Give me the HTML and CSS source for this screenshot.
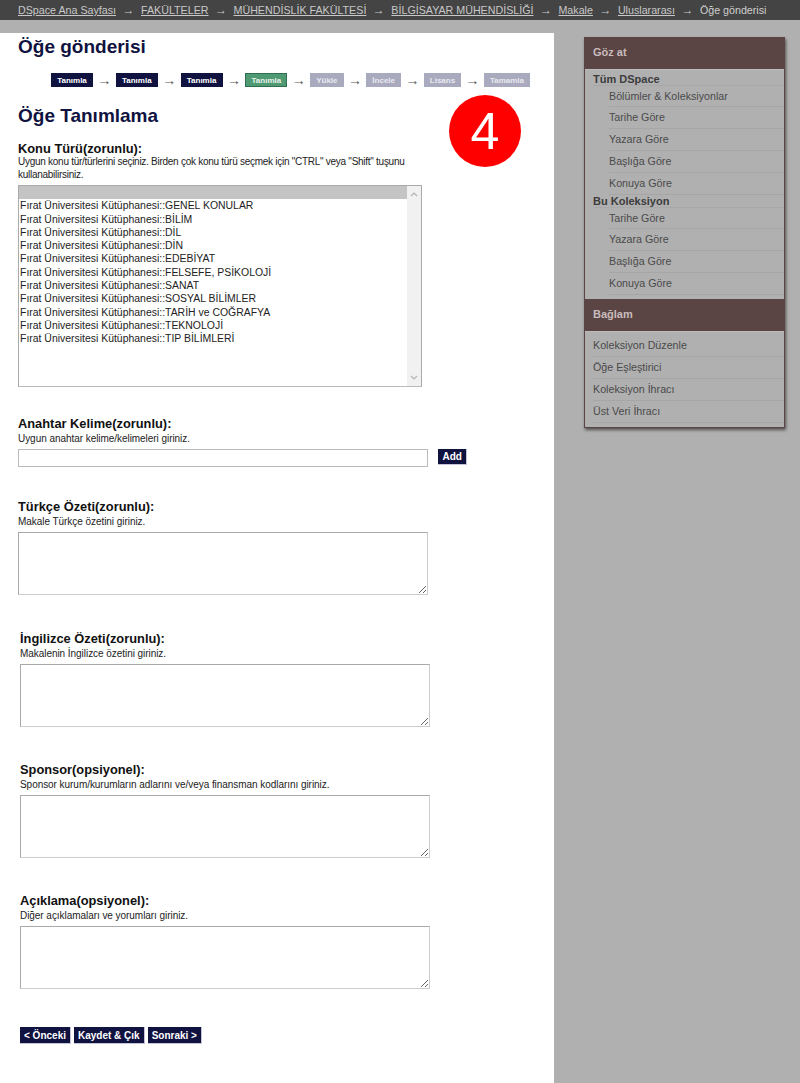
FILE: index.html
```html
<!DOCTYPE html>
<html lang="tr">
<head>
<meta charset="utf-8">
<title>Öğe gönderisi</title>
<link rel="stylesheet" href="styles.css">
</head>
<body>
<nav class="trail">
  <a href="#">DSpace Ana Sayfası</a><span class="sep">→</span>
  <a href="#">FAKÜLTELER</a><span class="sep">→</span>
  <a href="#">MÜHENDİSLİK FAKÜLTESİ</a><span class="sep">→</span>
  <a href="#">BİLGİSAYAR MÜHENDİSLİĞİ</a><span class="sep">→</span>
  <a href="#">Makale</a><span class="sep">→</span>
  <a href="#">Uluslararası</a><span class="sep">→</span>
  <span>Öğe gönderisi</span>
</nav>
<div class="page">
  <main class="main">
    <h1 class="title">Öğe gönderisi</h1>
    <div class="steps">
      <span class="step done">Tanımla</span><span class="arrow">→</span>
      <span class="step done">Tanımla</span><span class="arrow">→</span>
      <span class="step done">Tanımla</span><span class="arrow">→</span>
      <span class="step current">Tanımla</span><span class="arrow">→</span>
      <span class="step todo">Yükle</span><span class="arrow">→</span>
      <span class="step todo">İncele</span><span class="arrow">→</span>
      <span class="step todo">Lisans</span><span class="arrow">→</span>
      <span class="step todo">Tamamla</span>
    </div>
    <h2 class="title sub">Öğe Tanımlama</h2>
    <div class="badge">4</div>

    <section class="field first">
      <h3 class="label">Konu Türü(zorunlu):</h3>
      <p class="help tight">Uygun konu tür/türlerini seçiniz. Birden çok konu türü seçmek için "CTRL" veya "Shift" tuşunu kullanabilirsiniz.</p>
      <div class="listbox">
        <div class="options">
          <div class="option selected">&nbsp;</div>
          <div class="option">Fırat Üniversitesi Kütüphanesi::GENEL KONULAR</div>
          <div class="option">Fırat Üniversitesi Kütüphanesi::BİLİM</div>
          <div class="option">Fırat Üniversitesi Kütüphanesi::DİL</div>
          <div class="option">Fırat Üniversitesi Kütüphanesi::DİN</div>
          <div class="option">Fırat Üniversitesi Kütüphanesi::EDEBİYAT</div>
          <div class="option">Fırat Üniversitesi Kütüphanesi::FELSEFE, PSİKOLOJİ</div>
          <div class="option">Fırat Üniversitesi Kütüphanesi::SANAT</div>
          <div class="option">Fırat Üniversitesi Kütüphanesi::SOSYAL BİLİMLER</div>
          <div class="option">Fırat Üniversitesi Kütüphanesi::TARİH ve COĞRAFYA</div>
          <div class="option">Fırat Üniversitesi Kütüphanesi::TEKNOLOJİ</div>
          <div class="option">Fırat Üniversitesi Kütüphanesi::TIP BİLİMLERİ</div>
        </div>
        <div class="scrollbar">
          <svg class="chev" width="8" height="5" viewBox="0 0 8 5"><path d="M1 4 L4 1 L7 4" fill="none" stroke="#b4b4b4" stroke-width="1.2"/></svg>
          <svg class="chev" width="8" height="5" viewBox="0 0 8 5"><path d="M1 1 L4 4 L7 1" fill="none" stroke="#b4b4b4" stroke-width="1.2"/></svg>
        </div>
      </div>
    </section>

    <section class="field keyword">
      <h3 class="label">Anahtar Kelime(zorunlu):</h3>
      <p class="help">Uygun anahtar kelime/kelimeleri giriniz.</p>
      <div class="input-row">
        <input class="text-input" type="text">
        <button class="btn" type="button">Add</button>
      </div>
    </section>

    <section class="field summary">
      <h3 class="label">Türkçe Özeti(zorunlu):</h3>
      <p class="help">Makale Türkçe özetini giriniz.</p>
      <textarea class="area"></textarea>
    </section>

    <section class="field shifted english">
      <h3 class="label">İngilizce Özeti(zorunlu):</h3>
      <p class="help">Makalenin İngilizce özetini giriniz.</p>
      <textarea class="area"></textarea>
    </section>

    <section class="field shifted sponsor">
      <h3 class="label">Sponsor(opsiyonel):</h3>
      <p class="help">Sponsor kurum/kurumların adlarını ve/veya finansman kodlarını giriniz.</p>
      <textarea class="area"></textarea>
    </section>

    <section class="field shifted sponsor">
      <h3 class="label">Açıklama(opsiyonel):</h3>
      <p class="help">Diğer açıklamaları ve yorumları giriniz.</p>
      <textarea class="area"></textarea>
    </section>

    <div class="actions">
      <button class="btn wide" type="button">&lt; Önceki</button>
      <button class="btn wide" type="button">Kaydet &amp; Çık</button>
      <button class="btn wide" type="button">Sonraki &gt;</button>
    </div>
  </main>

  <aside class="sidebar">
    <div class="panel">
      <h2 class="panel-head">Göz at</h2>
      <div class="panel-body browse">
        <h3 class="group">Tüm DSpace</h3>
        <a class="link sub-link" href="#">Bölümler &amp; Koleksiyonlar</a>
        <a class="link sub-link" href="#">Tarihe Göre</a>
        <a class="link sub-link" href="#">Yazara Göre</a>
        <a class="link sub-link" href="#">Başlığa Göre</a>
        <a class="link sub-link" href="#">Konuya Göre</a>
        <h3 class="group">Bu Koleksiyon</h3>
        <a class="link sub-link" href="#">Tarihe Göre</a>
        <a class="link sub-link" href="#">Yazara Göre</a>
        <a class="link sub-link" href="#">Başlığa Göre</a>
        <a class="link sub-link" href="#">Konuya Göre</a>
      </div>
      <h2 class="panel-head">Bağlam</h2>
      <div class="panel-body context">
        <a class="link" href="#">Koleksiyon Düzenle</a>
        <a class="link" href="#">Öğe Eşleştirici</a>
        <a class="link" href="#">Koleksiyon İhracı</a>
        <a class="link" href="#">Üst Veri İhracı</a>
      </div>
    </div>
  </aside>
</div>
</body>
</html>
```
FILE: styles.css
```css
* { box-sizing: border-box; }
html, body { height: 100%; }
body {
  margin: 0;
  background: #b0b0b0;
  font-family: "Liberation Sans", Arial, sans-serif;
  color: #222;
  overflow: hidden;
}
.trail {
  height: 20px;
  background: #444;
  color: #cfcfcf;
  font-size: 10.7px;
  line-height: 20px;
  padding-left: 18px;
  white-space: nowrap;
}
.trail a { color: #c8c8c8; }
.trail .sep { margin: 0 3.5px 0 6.5px; color: #c8c8c8; font-size: 12px; }
.page {
  display: flex;
  align-items: flex-start;
  padding-top: 13px;
  height: 1063px;
}
.main {
  position: relative;
  width: 554px;
  height: 1050px;
  background: #fff;
  padding: 0 18px;
  flex: none;
}
.title {
  margin: 0;
  font-size: 19px;
  line-height: 28px;
  font-weight: bold;
  color: #10123f;
}
.sub { margin-top: 15px; }
.steps {
  display: flex;
  align-items: center;
  height: 14px;
  margin: 12px 0 0 33px;
  width: 480px;
}
.step {
  height: 14px;
  font-size: 8px;
  font-weight: bold;
  line-height: 13px;
  text-align: center;
  padding: 0 5px;
  border: 1px solid transparent;
  white-space: nowrap;
}
.step.done { background: #10123f; color: #fff; min-width: 42px; }
.step.current { background: #4f9a73; border-color: #2f6f50; color: #e8f2ec; min-width: 42px; }
.step.todo { background: #aaaabf; color: #e9e9ef; }
.arrow {
  width: 22.8px;
  text-align: center;
  font-size: 14px;
  line-height: 14px;
  color: #555;
}
.badge {
  position: absolute;
  left: 449px;
  top: 62px;
  width: 72px;
  height: 72px;
  border-radius: 50%;
  background: #fe0000;
  color: #fff;
  font-size: 52px;
  line-height: 72px;
  text-align: center;
}
.field { width: 470px; }
.first { margin-top: 10px; width: 404px; }
.keyword { margin-top: 28px; }
.summary { margin-top: 31px; }
.english { margin-top: 35px; }
.sponsor { margin-top: 34px; }
.shifted { padding-left: 2px; }
.label {
  margin: 0;
  font-size: 12.85px;
  line-height: 17px;
  font-weight: bold;
  color: #111;
}
.help {
  margin: 0 0 4px;
  font-size: 10px;
  line-height: 13px;
  letter-spacing: -0.05px;
  color: #222;
}
.help.tight { margin-top: -2px; letter-spacing: -0.27px; }
.listbox {
  display: flex;
  width: 404px;
  height: 202px;
  border: 1px solid #aaa;
  border-bottom-color: #bbb;
  background: #fff;
  margin-top: 3px;
}
.options { flex: 1; }
.option {
  font-size: 10.45px;
  line-height: 13.3px;
  padding-left: 1px;
  color: #222;
  white-space: nowrap;
}
.option.selected { background: #c4c4c4; }
.scrollbar {
  width: 14px;
  background: #f1f1f1;
  display: flex;
  flex-direction: column;
  justify-content: space-between;
  align-items: center;
  padding: 6px 0;
}
.chev { display: block; }
.input-row { display: flex; align-items: flex-start; gap: 10px; }
.text-input {
  width: 410px;
  height: 18px;
  margin: 0;
  padding: 0 2px;
  border: 1px solid #bbb;
  background: #fff;
}
.area {
  display: block;
  width: 410px;
  height: 63px;
  margin: 0;
  padding: 2px;
  border: 1px solid #aaa;
  border-bottom-color: #ccc;
  border-right-color: #ccc;
  background: #fff;
  resize: both;
  outline: none;
}
.btn {
  height: 16px;
  margin: 0;
  padding: 0 4.5px;
  border: 1px solid #c4c4d8;
  border-width: 0 1px 1px 0;
  background: #10123f;
  color: #fff;
  font-family: "Liberation Sans", Arial, sans-serif;
  font-size: 10px;
  font-weight: bold;
  line-height: 15px;
}
.actions {
  display: flex;
  gap: 3px;
  margin: 38px 0 0 2px;
}
.btn.wide { height: 17px; padding: 0 4px; }
.sidebar { padding: 4px 0 0 30px; flex: none; width: 230px; }
.panel {
  width: 201px;
  border: 1px solid #5a4444;
  border-top: 0;
  box-shadow: 1px 2px 3px rgba(0, 0, 0, 0.55);
  background: #b0b0b0;
}
.panel-head {
  margin: 0;
  height: 32px;
  background: #5a4444;
  color: #c9bcbc;
  font-size: 11px;
  font-weight: bold;
  line-height: 31px;
  padding-left: 8px;
}
.panel-body { padding: 0 0 0 8px; border-top: 1px solid #bdbdbd; }
.group {
  margin: 0;
  font-size: 11px;
  font-weight: bold;
  line-height: 12px;
  color: #3c3c3c;
  border-bottom: 1px solid #a8a8a8;
}
.group:first-child { padding-top: 3px; }
.link {
  display: block;
  height: 22px;
  font-size: 10.7px;
  line-height: 21px;
  color: #4a4a4a;
  text-decoration: none;
  border-bottom: 1px solid #a6a6a6;
}
.sub-link { margin-left: 16px; }
.browse { padding-bottom: 4px; }
.browse .group + .sub-link { height: 21px; line-height: 21px; }
.context { padding-top: 3px; padding-bottom: 4px; }
```
